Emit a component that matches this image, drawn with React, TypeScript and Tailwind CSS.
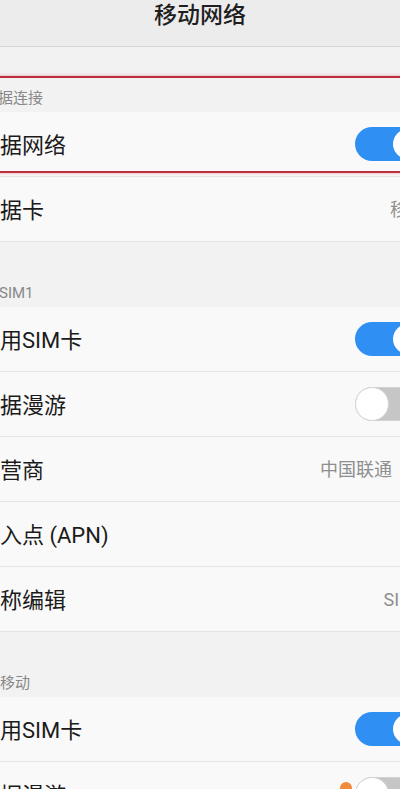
import React from 'react';

const font = "font-['Roboto','Noto_Sans_CJK_SC',sans-serif]";

function Toggle({ on }: { on: boolean }) {
  if (on) {
    return (
      <div className="flex h-[34px] w-[70px] shrink-0 items-center justify-end rounded-full bg-[#2f8ff2] p-[2px]">
        <div className="h-[30px] w-[30px] rounded-full bg-white" />
      </div>
    );
  }
  return (
    <div className="flex h-[34px] w-[70px] shrink-0 items-center justify-start rounded-full border border-[#d2d2d2] bg-[#c6c6c6]">
      <div className="h-[34px] w-[34px] -ml-px rounded-full border border-[#d4d4d4] bg-white" />
    </div>
  );
}

type Row = { label: string; toggle?: boolean; value?: string; valueMr?: string };

function SettingRow({ row }: { row: Row }) {
  return (
    <div className="flex h-[65px] items-center justify-between border-b border-[#e4e4e4] bg-[#f9f9f9] pr-[23px]">
      <span className="whitespace-nowrap pt-[3px] text-[22px] leading-none text-[#1b1b1b]">{row.label}</span>
      {row.toggle !== undefined && <Toggle on={row.toggle} />}
      {row.value && (
        <span className={`whitespace-nowrap pt-[2px] text-[18px] leading-none text-[#8e8e8e] ${row.valueMr ?? ''}`}>
          {row.value}
        </span>
      )}
    </div>
  );
}

function SectionLabel({ text, pad }: { text: string; pad: string }) {
  return (
    <div className={`flex h-[65px] items-end bg-[#f2f2f2] pb-[4px] ${pad}`}>
      <span className="whitespace-nowrap text-[15px] leading-[20px] text-[#888888]">{text}</span>
    </div>
  );
}

export default function App() {
  return (
    <div className={`relative h-[789px] w-[400px] overflow-hidden bg-[#f2f2f2] ${font}`}>
      {/* 标题栏 */}
      <div className="h-[47px] border-b border-[#d5d5d5] bg-[#ececec] text-center">
        <h1 className="pt-[1px] text-[23px] leading-[29px] font-medium text-[#1f1f1f]">移动网络</h1>
      </div>

      <div className="-ml-[22px] w-[470px]">
        <SectionLabel text="数据连接" pad="pl-[5px]" />
        <SettingRow row={{ label: '数据网络', toggle: true }} />
        <SettingRow row={{ label: '数据卡', value: '移动', valueMr: '-mr-[1px]' }} />

        <SectionLabel text="SIM1" pad="pl-[21px]" />
        <SettingRow row={{ label: '启用SIM卡', toggle: true }} />
        <SettingRow row={{ label: '数据漫游', toggle: false }} />
        <SettingRow row={{ label: '运营商', value: '中国联通', valueMr: 'mr-[33px]' }} />
        <SettingRow row={{ label: '接入点 (APN)' }} />
        <SettingRow row={{ label: '名称编辑', value: 'SIM1' }} />

        <SectionLabel text="移动" pad="pl-[22px]" />
        <SettingRow row={{ label: '启用SIM卡', toggle: true }} />
        <SettingRow row={{ label: '数据漫游', toggle: false }} />
      </div>

      {/* 红色标注框 */}
      <div className="pointer-events-none absolute top-[76px] -left-[10px] -right-[10px] h-[97px] border-2 border-[#bd2e3e] shadow-[0_0_3px_rgba(220,90,100,0.55)]" />

      {/* 水印一角 */}
      <div className="absolute left-[340px] top-[782px] h-[12px] w-[12px] rounded-full bg-[#f08a3c]" />
    </div>
  );
}
